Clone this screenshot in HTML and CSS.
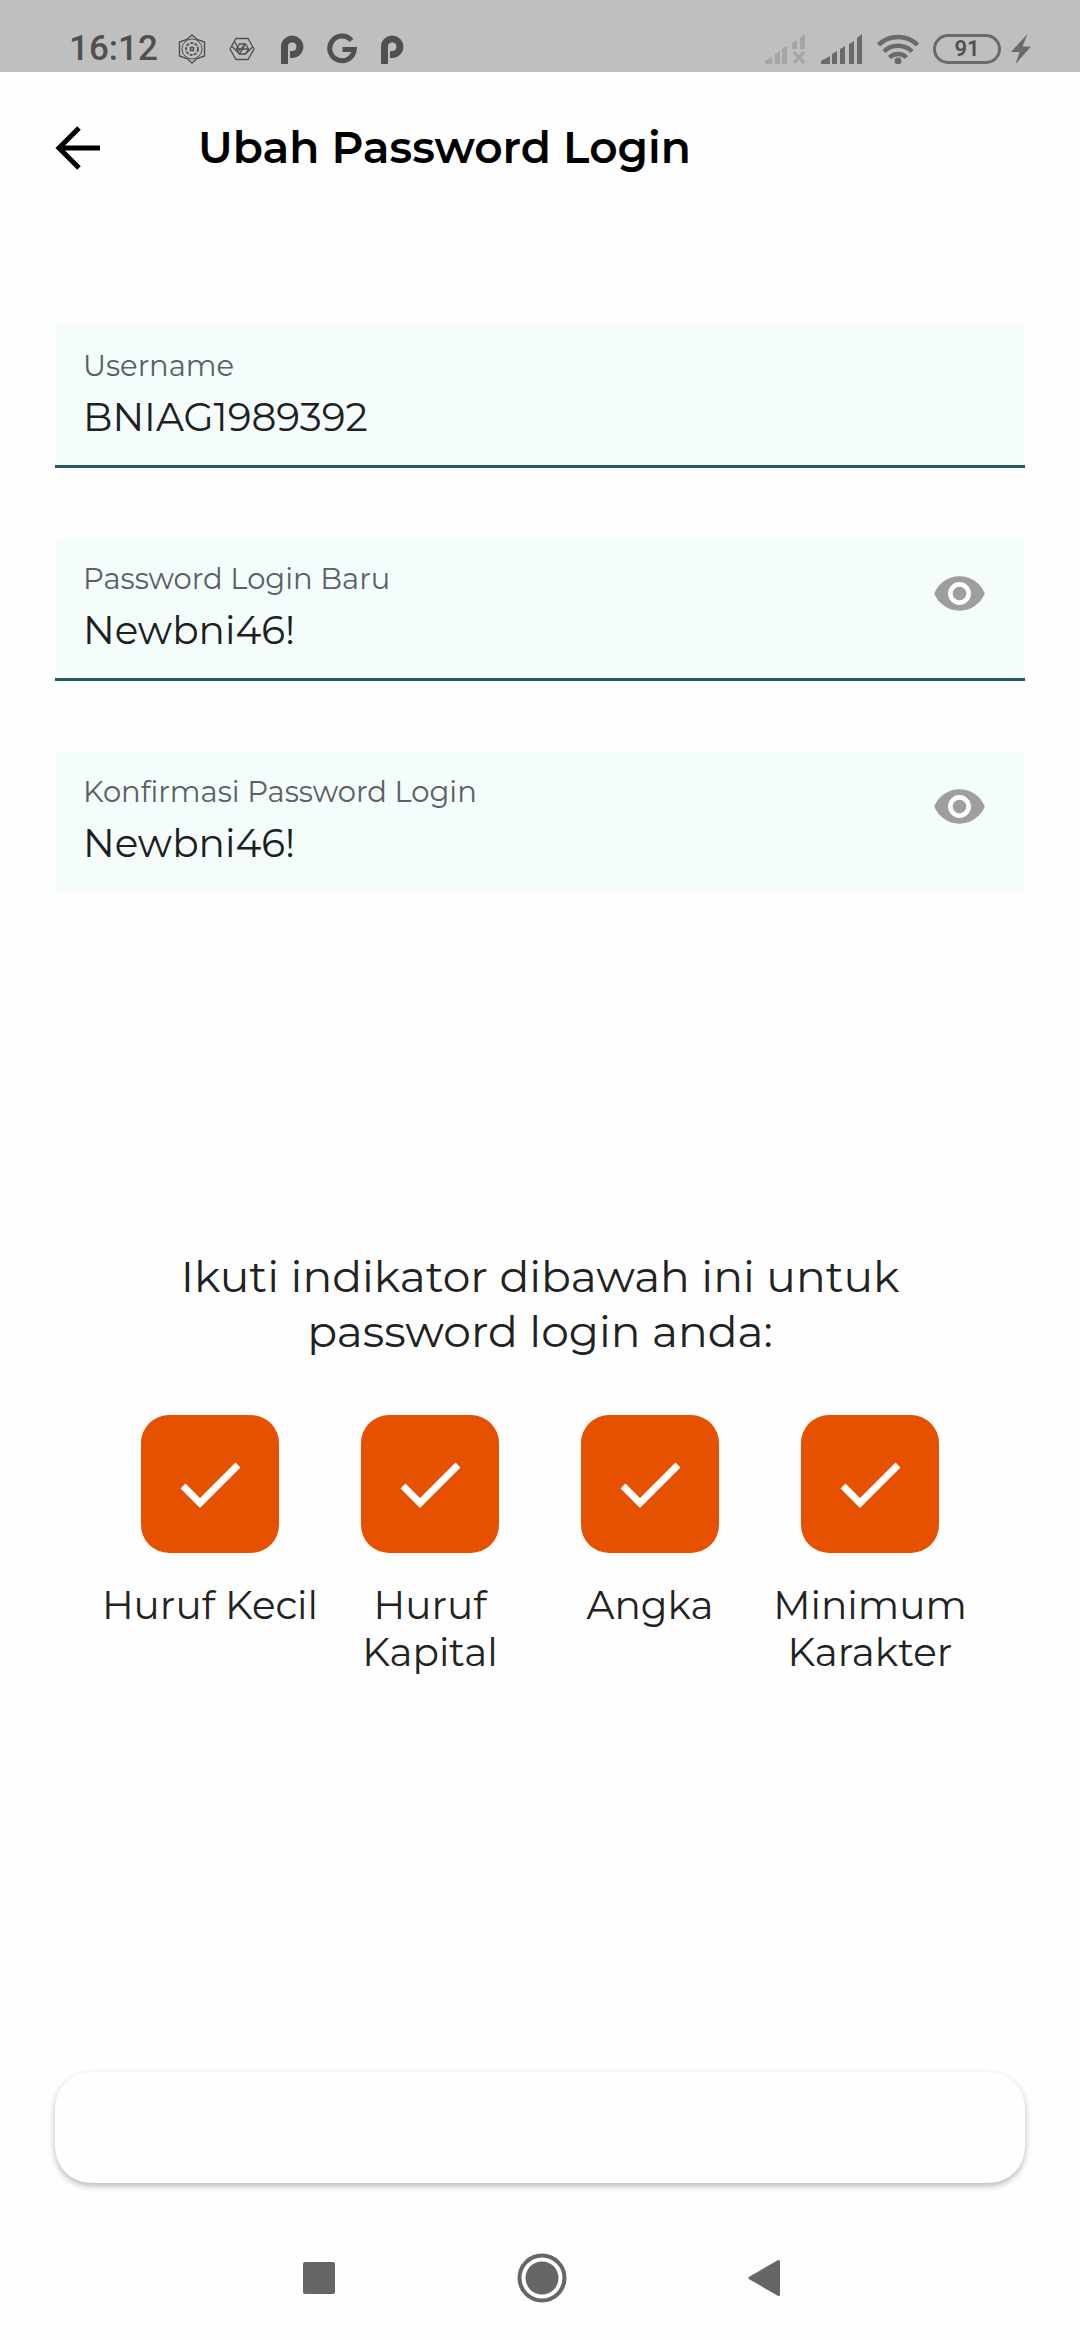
FILE: index.html
```html
<!DOCTYPE html>
<html lang="id">
<head>
<meta charset="utf-8">
<meta name="viewport" content="width=device-width, initial-scale=1">
<title>Ubah Password Login</title>
<link rel="stylesheet" href="styles.css">
</head>
<body>
<div class="status-bar">
  <div class="status-left">
    <span class="clock">16:12</span>
    <svg class="notif" viewBox="-1 -1 32 32" fill="none" stroke="#505050" stroke-width="1.400">
      <path d="M15 1 20 5.500 27.500 8v14L20 24.500 15 29l-5-4.500L2.500 22V8L10 5.500z"/><circle cx="15" cy="15" r="10" stroke-width="1"/>
      <circle cx="15" cy="15" r="6" stroke-dasharray="3 1.300" stroke-width="1.800"/><path d="M13.500 13.500h3v3h-3z"/>
    </svg>
    <svg class="notif" viewBox="-1 -1 32 32" fill="none" stroke="#505050" stroke-width="1.300">
      <path d="M9 4.500h12L27 15l-6 10.500H9L3 15z"/><path d="M12.500 10h6l3 5-3 5h-6l-3-5z"/><path d="M4.500 12l8 8 6-10M9.500 15h12M7.500 7.500l5 9 6-6.500M25.500 13l-7 7"/>
    </svg>
    <svg class="notif" viewBox="-1 -1 32 32" fill="none" stroke="#505050" stroke-width="7">
      <path d="M7.500 30V12a7.700 7.700 0 1 1 7.700 8.500H13"/>
    </svg>
    <svg class="notif" viewBox="-1 -1 32 32" fill="none" stroke="#505050" stroke-width="5">
      <path d="M24.500 6.500A12.300 12.300 0 1 0 27.300 15.500H15.500"/>
    </svg>
    <svg class="notif" viewBox="-1 -1 32 32" fill="none" stroke="#505050" stroke-width="7">
      <path d="M7.500 30V12a7.700 7.700 0 1 1 7.700 8.500H13"/>
    </svg>
  </div>
  <div class="status-right">
    <svg class="signal" viewBox="0 0 42 30" fill="#a5a5a5">
      <path d="M0 30v-3l7-4v7zM10 30V20l5-3v13zM17 30V15l5-3v18zM27 15V9l5-3v9zM35 15V4l5-4v15z"/>
      <path d="M29 18l10 11M39 18 29 29" stroke="#a5a5a5" stroke-width="3"/>
    </svg>
    <svg class="signal" viewBox="0 0 42 30" fill="#6a6a6a">
      <path d="M0 30v-3l9-5v8zM11 30V20l5-3v13zM19 30V15l5-3v18zM28 30V10l5-3v23zM36 30V4l5-4v30z"/>
    </svg>
    <svg class="wifi" viewBox="0 0 42 30" fill="none" stroke="#6a6a6a" stroke-width="4.500">
      <path d="M1.500 11a28 28 0 0 1 39 0M7 17.500a20 20 0 0 1 28 0M12.500 23.500a12 12 0 0 1 17 0"/><circle cx="21" cy="27" r="3.500" fill="#6a6a6a" stroke="none"/>
    </svg>
    <span class="battery">91</span>
    <svg class="bolt" viewBox="0 0 20 30" fill="#6a6a6a"><path d="M16.500 0 0 18h8.500L4.500 30 20 12.500h-8.500z"/></svg>
  </div>
</div>

<header class="app-bar">
  <button class="back" type="button" aria-label="Kembali">
    <svg viewBox="0 0 46 46" fill="none" stroke="#000" stroke-width="5"><path d="M45 24H5M24 4 4 24l20 20"/></svg>
  </button>
  <h1 class="title">Ubah Password Login</h1>
</header>

<main class="content">
  <form class="form" id="form">
    <div class="field field-lined">
      <div class="field-text">
        <label for="username">Username</label>
        <input id="username" type="text" value="BNIAG1989392">
      </div>
    </div>
    <div class="field field-lined">
      <div class="field-text">
        <label for="new-password">Password Login Baru</label>
        <input id="new-password" type="text" value="Newbni46!">
      </div>
      <button class="reveal" type="button" aria-label="Tampilkan password">
        <svg viewBox="0 0 24 24"><path fill="#9e9e9e" d="M12 4.500C7 4.500 2.730 7.610 1 12c1.730 4.390 6 7.500 11 7.500s9.270-3.110 11-7.500c-1.730-4.390-6-7.500-11-7.500z"/><circle cx="12" cy="12" r="4" fill="#9e9e9e" stroke="#fff" stroke-width="2"/></svg>
      </button>
    </div>
    <div class="field">
      <div class="field-text">
        <label for="confirm-password">Konfirmasi Password Login</label>
        <input id="confirm-password" type="text" value="Newbni46!">
      </div>
      <button class="reveal" type="button" aria-label="Tampilkan password">
        <svg viewBox="0 0 24 24"><path fill="#9e9e9e" d="M12 4.500C7 4.500 2.730 7.610 1 12c1.730 4.390 6 7.500 11 7.500s9.270-3.110 11-7.500c-1.730-4.390-6-7.500-11-7.500z"/><circle cx="12" cy="12" r="4" fill="#9e9e9e" stroke="#fff" stroke-width="2"/></svg>
      </button>
    </div>
  </form>

  <section class="rules">
    <h2 class="rules-title">Ikuti indikator dibawah ini untuk<br>password login anda:</h2>
    <div class="rules-list">
      <label class="rule"><span class="tick"><input type="checkbox" checked><svg viewBox="0 0 138 138"><path d="M42 71l17 17 38-38"/></svg></span>Huruf Kecil</label>
      <label class="rule"><span class="tick"><input type="checkbox" checked><svg viewBox="0 0 138 138"><path d="M42 71l17 17 38-38"/></svg></span>Huruf<br>Kapital</label>
      <label class="rule"><span class="tick"><input type="checkbox" checked><svg viewBox="0 0 138 138"><path d="M42 71l17 17 38-38"/></svg></span>Angka</label>
      <label class="rule"><span class="tick"><input type="checkbox" checked><svg viewBox="0 0 138 138"><path d="M42 71l17 17 38-38"/></svg></span>Minimum<br>Karakter</label>
    </div>
  </section>
  <button class="submit" type="submit" form="form" aria-label="Simpan"></button>
</main>

<nav class="nav-bar">
  <button type="button" aria-label="Aplikasi terbaru"><svg viewBox="0 0 50 50" fill="#666"><rect x="9" y="9" width="32" height="32" rx="2"/></svg></button>
  <button type="button" aria-label="Beranda"><svg viewBox="0 0 50 50" fill="#666"><circle cx="25" cy="25" r="16.500"/><circle cx="25" cy="25" r="22.500" fill="none" stroke="#666" stroke-width="4"/></svg></button>
  <button type="button" aria-label="Kembali"><svg viewBox="0 0 50 50" fill="#666" stroke="#666" stroke-width="3" stroke-linejoin="round"><path d="M39.500 8.500v33L11 25z"/></svg></button>
</nav>
</body>
</html>
```

FILE: styles.css
```css
* { box-sizing: border-box; }

body {
  margin: 0;
  min-height: 100vh;
  display: flex;
  flex-direction: column;
  background: #fefefe;
  color: #222;
  font-family: Montserrat, Inter, "Open Sans", sans-serif;
  font-weight: 400;
  font-variant-ligatures: none;
}

button {
  padding: 0;
  border: 0;
  background: none;
}

svg { display: block; }

.status-bar {
  height: 72px;
  padding: 26px 49px 0 69px;
  display: flex;
  justify-content: space-between;
  background: #bfbfbf;
  color: #505050;
}

.status-left,
.status-right {
  height: 45px;
  display: flex;
  align-items: center;
}

.status-left { gap: 18px; }
.status-right { gap: 14px; }

.clock {
  font: 500 35px/40px Roboto, sans-serif;
}

.notif { width: 32px; height: 32px; }
.signal,
.wifi { width: 42px; height: 30px; }
.bolt { width: 20px; height: 30px; margin-left: -4px; }

.battery {
  width: 68px;
  height: 30px;
  border: 3px solid #6a6a6a;
  border-radius: 15px;
  text-align: center;
  font: 600 22px/24px Roboto, sans-serif;
}

.app-bar {
  padding: 48px 55px;
  display: flex;
  align-items: center;
  gap: 97px;
}

.back,
.back svg { width: 46px; height: 46px; }

.title {
  margin: 0;
  color: #000;
  font-size: 44px;
  line-height: 54px;
  font-weight: 600;
}

.content {
  flex: 1;
  padding: 103px 55px 0;
  display: flex;
  flex-direction: column;
}

.form {
  display: flex;
  flex-direction: column;
  gap: 70px;
}

.field {
  padding: 22px 38px 22px 28px;
  display: flex;
  justify-content: space-between;
  border-bottom: 3px solid transparent;
  border-radius: 6px 6px 0 0;
  background: #f4fdfb padding-box;
}

.field-lined { border-bottom-color: #265a5c; border-radius: 0; }

.field-text {
  flex: 1;
  min-width: 0;
  display: flex;
  flex-direction: column;
  gap: 6px;
}

.field label {
  color: #5a6063;
  font-size: 29px;
  line-height: 38px;
}

.field input {
  width: 100%;
  height: 52px;
  padding: 0;
  border: 0;
  outline: 0;
  background: none;
  color: #1c2020;
  font-family: inherit;
  font-variant-ligatures: none;
  font-weight: 400;
  font-size: 39px;
}

.reveal { align-self: flex-start; margin-top: 6px; }
.reveal svg { width: 55px; height: 55px; }

.rules {
  margin-top: 355px;
  text-align: center;
}

.rules-title {
  margin: 0;
  font-size: 44px;
  line-height: 55px;
  font-weight: 400;
}

.rules-list {
  padding: 0 45px;
  margin-top: 56px;
  display: grid;
  grid-template-columns: repeat(4, 1fr);
}

.rule {
  font-size: 39px;
  line-height: 47px;
  white-space: nowrap;
}

.tick {
  width: 138px;
  margin: 0 auto 29px;
  display: grid;
}

.tick input,
.tick svg {
  grid-area: 1 / 1;
  width: 138px;
  height: 138px;
  margin: 0;
}

.tick input {
  appearance: none;
  border-radius: 28px;
  background: #e65100;
}

.tick svg {
  z-index: 1;
  pointer-events: none;
  fill: none;
  stroke: #fff;
  stroke-width: 7;
}

.submit {
  height: 111px;
  margin-top: auto;
  border-radius: 36px;
  background: #fefefe;
  box-shadow: 0 3px 6px rgba(0, 0, 0, 0.28);
}

.nav-bar {
  margin-top: 70px;
  padding: 0 291px 37px 294px;
  display: flex;
  justify-content: space-between;
}

.nav-bar svg { width: 50px; height: 50px; }
```
